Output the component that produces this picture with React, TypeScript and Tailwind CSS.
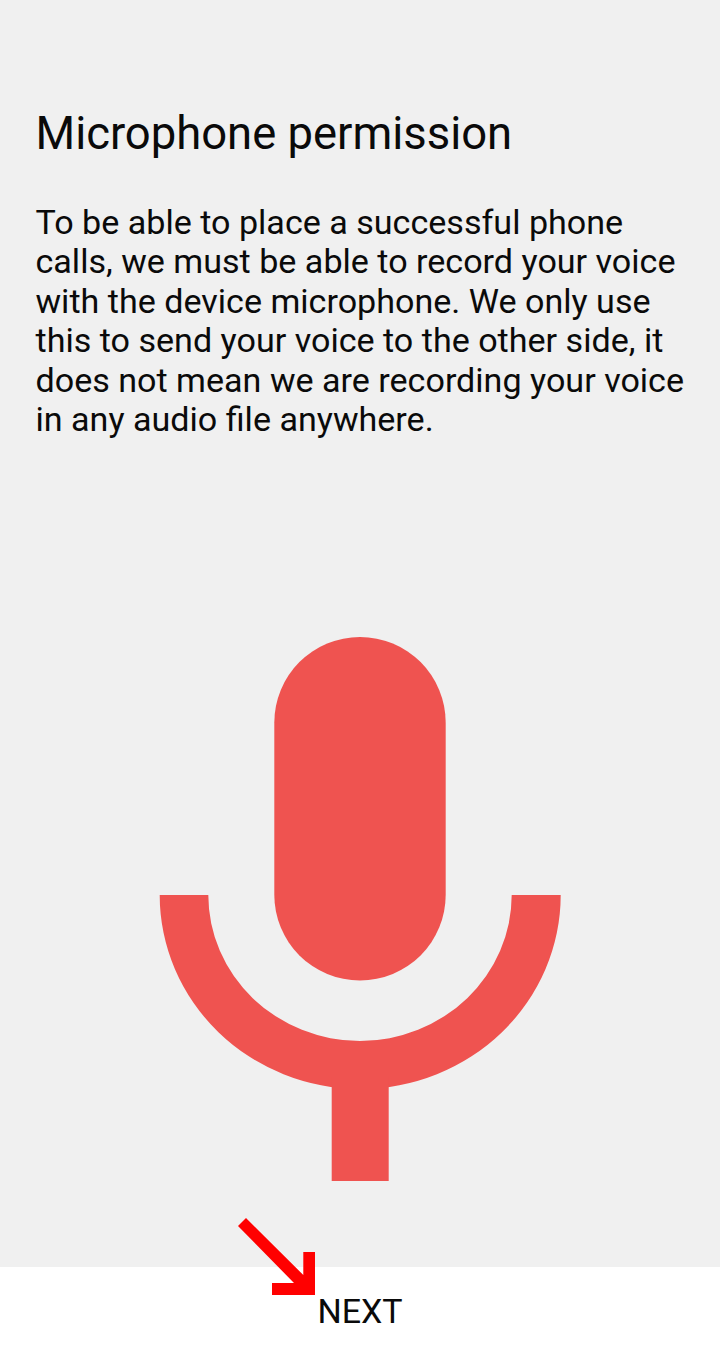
export default function App() {
  return (
    <div className="w-[720px] h-[1348px] flex flex-col bg-[#f0f0f0] overflow-hidden" style={{ fontFamily: "Roboto, sans-serif" }}>
      <div className="flex-1 flex flex-col pl-[35.5px] pr-[30px] pt-[108px]">
        <h1 className="text-[45.4px] leading-[52px] font-normal text-[#0a0a0a]">Microphone permission</h1>
        <p className="mt-[43px] text-[34.1px] leading-[39.4px] text-[#0a0a0a]">
          To be able to place a successful phone calls, we must be able to record your voice with the device microphone. We only use this to send your voice to the other side, it does not mean we are recording your voice in any audio file anywhere.
        </p>
        <div className="flex mt-[198px] ml-[123.5px]">
          <svg width="402" height="545" viewBox="0 0 402 545">
            <rect x="115.3" y="0" width="171.4" height="343.5" rx="85.7" fill="#ef5350" />
            <path d="M0.7 258H49.3A151.7 146 0 0 0 352.7 258H401.7A200.5 194 0 0 1 0.7 258Z" fill="#ef5350" />
            <rect x="172.7" y="440" width="57" height="104" fill="#ef5350" />
          </svg>
        </div>
      </div>
      <div className="relative h-[81px] bg-white flex items-center justify-center">
        <span className="text-[34px] leading-[38px] text-[#0a0a0a] mt-[7px]">NEXT</span>
        <svg className="absolute left-[236px] top-[-51px]" width="82" height="80" viewBox="0 0 82 80">
          <path d="M10 2L67.3 59V36H79V79H36V67H58L2 10Z" fill="#ff0000" />
        </svg>
      </div>
    </div>
  );
}
